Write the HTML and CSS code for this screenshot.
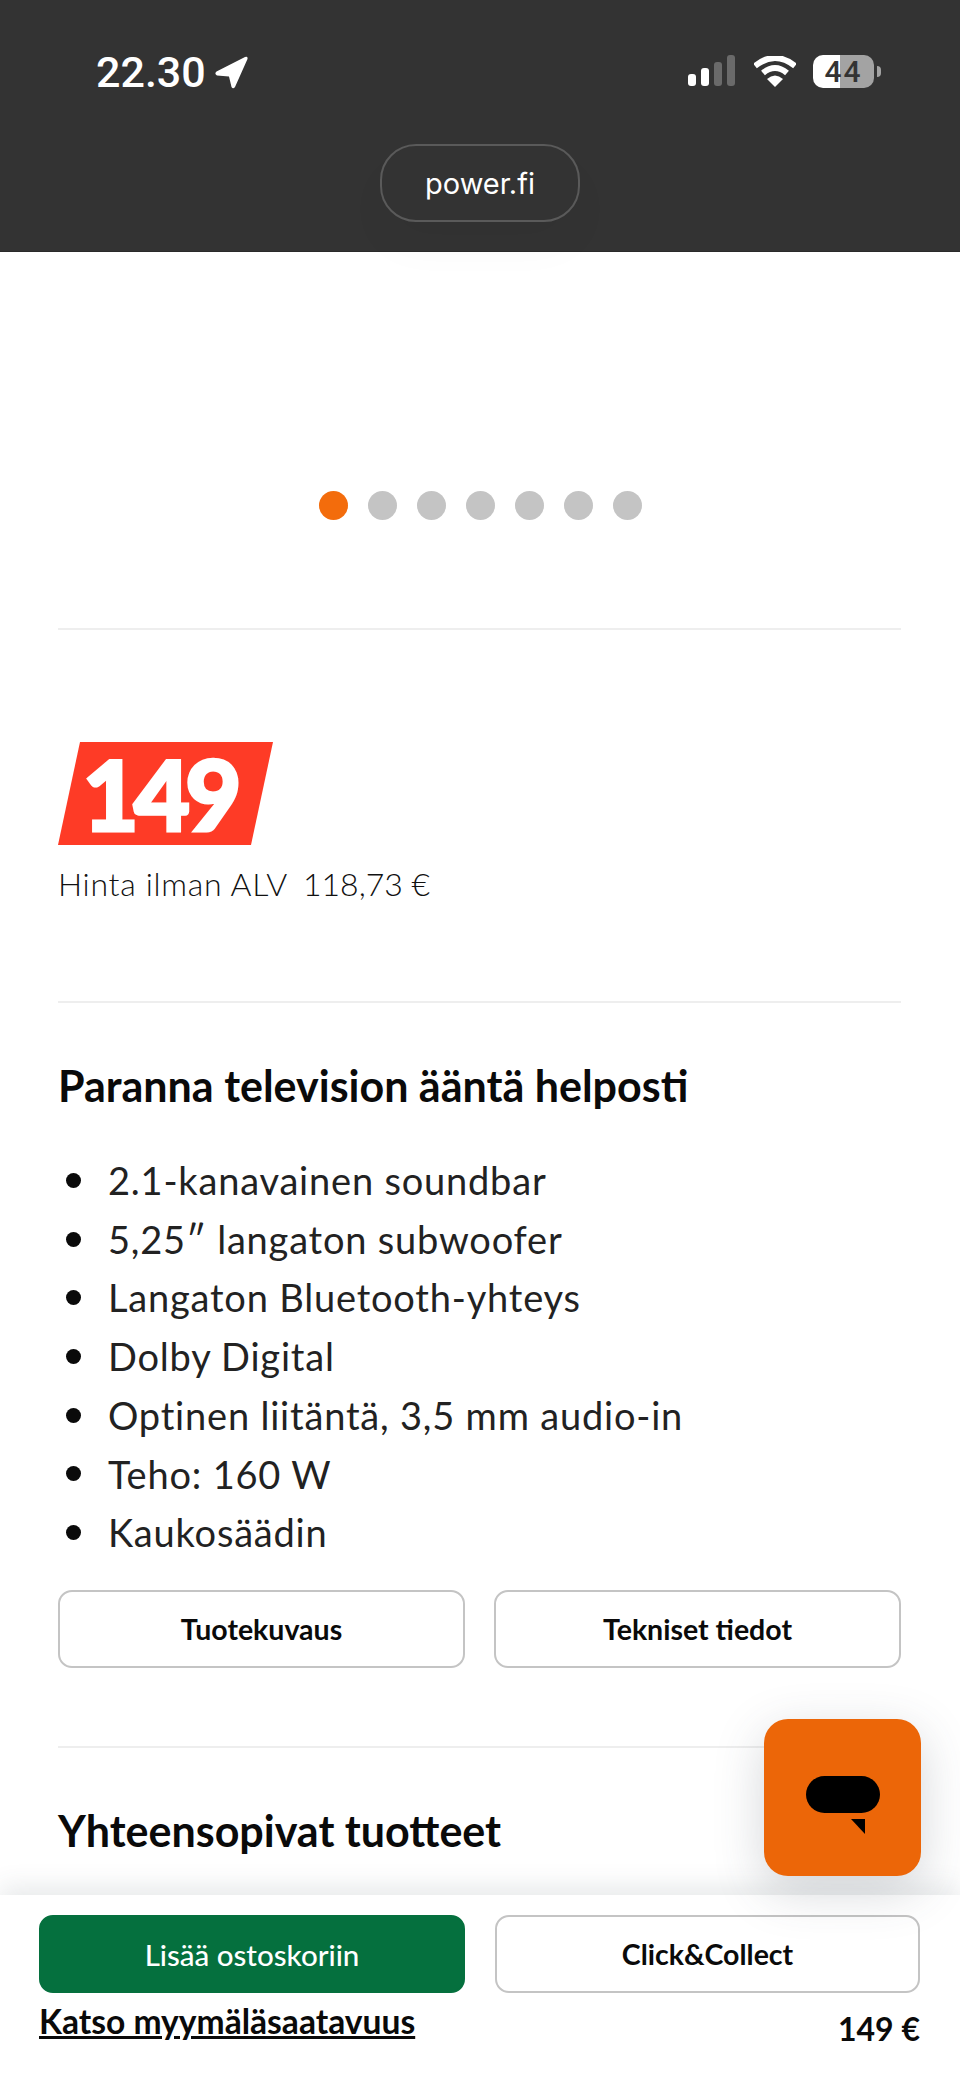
FILE: index.html
```html
<!DOCTYPE html>
<html lang="fi">
<head>
  <meta charset="UTF-8">
  <meta name="viewport" content="width=device-width, initial-scale=1.0">
  <title>Power.fi</title>
  <link rel="stylesheet" href="styles.css">
</head>
<body>
  <header class="status-area">
    <div class="status-bar">
      <div class="status-time">
        <span>22.30</span>
        <svg class="location-icon" width="33" height="33" viewBox="0 0 33 33"><path d="M30 1 Q33 0 32.500 3 L20 31 Q18 33.500 16.500 31 L14 20.500 L2 19.500 Q-1 18 1.500 15.500 Z" fill="#fff"/></svg>
      </div>
      <div class="status-icons">
        <svg class="signal-icon" width="48" height="32" viewBox="0 0 48 32">
          <rect x="0" y="19" width="8" height="12" rx="3" fill="#fff"/>
          <rect x="13" y="13" width="8" height="18" rx="3" fill="#fff"/>
          <rect x="26" y="7" width="8" height="24" rx="3" fill="#6a6a6a"/>
          <rect x="39" y="0" width="8" height="31" rx="3" fill="#6a6a6a"/>
        </svg>
        <svg class="wifi-icon" width="42" height="31" viewBox="0 0 42 31">
          <path d="M1 10 Q21 -6 41 10" fill="none" stroke="#fff" stroke-width="6"/>
          <path d="M9 17 Q21 7 33 17" fill="none" stroke="#fff" stroke-width="6"/>
          <path d="M13 23 Q21 16 29 23 L21 31 Z" fill="#fff"/>
        </svg>
        <div class="battery"><span>44</span></div>
        <div class="battery-tip"></div>
      </div>
    </div>
    <div class="url-pill">power.fi</div>
  </header>

  <section class="gallery">
    <div class="dots">
      <span class="dot active"></span>
      <span class="dot"></span>
      <span class="dot"></span>
      <span class="dot"></span>
      <span class="dot"></span>
      <span class="dot"></span>
      <span class="dot"></span>
    </div>
  </section>

  <section class="price-box">
    <div class="price-tag">149</div>
    <p class="price-vat"><span class="vat-label">Hinta ilman ALV</span><span>118,73 €</span></p>
  </section>

  <section class="description">
    <h2>Paranna television ääntä helposti</h2>
    <ul class="features">
      <li>2.1-kanavainen soundbar</li>
      <li>5,25″ langaton subwoofer</li>
      <li>Langaton Bluetooth-yhteys</li>
      <li>Dolby Digital</li>
      <li>Optinen liitäntä, 3,5 mm audio-in</li>
      <li>Teho: 160 W</li>
      <li>Kaukosäädin</li>
    </ul>
    <div class="tabs">
      <button class="btn">Tuotekuvaus</button>
      <button class="btn">Tekniset tiedot</button>
    </div>
  </section>

  <section class="related">
    <h2>Yhteensopivat tuotteet</h2>
  </section>

  <button class="chat-button" aria-label="Chat">
    <svg width="74" height="60" viewBox="0 0 74 60">
      <rect x="0" y="0" width="74" height="37" rx="18.500" fill="#000"/>
      <path d="M45 43 L59 43 L59 58 Z" fill="#000"/>
    </svg>
  </button>

  <footer class="buy-bar">
    <div class="buy-buttons">
      <button class="btn btn-green">Lisää ostoskoriin</button>
      <button class="btn">Click&amp;Collect</button>
    </div>
    <div class="buy-info">
      <a href="#" class="store-link">Katso myymäläsaatavuus</a>
      <span class="buy-price">149 €</span>
    </div>
  </footer>
</body>
</html>
```

FILE: styles.css
```css
* {
  box-sizing: border-box;
}

html, body {
  margin: 0;
  height: 2081px;
  overflow: hidden;
}

body {
  position: relative;
  background: #fff;
  color: #111;
  font-family: Lato, "Noto Sans", sans-serif;
}

/* Status bar */
.status-area {
  height: 252px;
  background: #333;
  border-bottom: 1px solid #2a2a2a;
  display: flex;
  flex-direction: column;
  align-items: center;
}

.status-bar {
  width: 100%;
  height: 144px;
  padding: 54px 79px 0 96px;
  display: flex;
  justify-content: space-between;
  align-items: flex-start;
  color: #fff;
}

.status-time {
  display: flex;
  align-items: center;
  gap: 9px;
  font-family: Roboto, sans-serif;
  font-size: 43px;
  font-weight: 500;
  line-height: 36px;
}

.status-icons {
  display: flex;
  align-items: center;
  height: 34px;
}

.signal-icon {
  margin-right: 18px;
}

.wifi-icon {
  margin-right: 17px;
}

.battery {
  width: 61px;
  height: 33px;
  border-radius: 10px;
  background: linear-gradient(to right, #fff 45%, #a3a3a3 45%);
  color: #333;
  font-family: Roboto, sans-serif;
  font-size: 30px;
  font-weight: 500;
  letter-spacing: 2px;
  line-height: 33px;
  text-align: center;
}

.battery-tip {
  width: 4px;
  height: 11px;
  margin-left: 3px;
  background: #a3a3a3;
  border-radius: 0 4px 4px 0;
}

.url-pill {
  width: 200px;
  height: 78px;
  border: 2px solid #5a5a5a;
  border-radius: 36px;
  color: #fff;
  font-family: Inter, sans-serif;
  font-size: 29px;
  line-height: 76px;
  text-align: center;
  box-shadow: 0 26px 40px rgba(0, 0, 0, 0.03);
}

/* Gallery dots */
.gallery {
  margin: 0 59px 0 58px;
  padding: 239px 0 108px;
  border-bottom: 2px solid #eee;
}

.dots {
  display: flex;
  justify-content: center;
  gap: 20px;
  padding-left: 1px;
}

.dot {
  width: 29px;
  height: 29px;
  border-radius: 50%;
  background: #c4c4c4;
}

.dot.active {
  background: #f36c0c;
}

/* Price */
.price-box {
  margin: 0 59px 0 58px;
  padding: 112px 0 97px;
  border-bottom: 2px solid #eee;
}

.price-tag {
  width: 215px;
  height: 103px;
  padding-right: 12px;
  background: #fe3b26;
  clip-path: polygon(22px 0, 100% 0, 193px 100%, 0 100%);
  color: #fff;
  font-size: 97px;
  font-weight: 900;
  letter-spacing: -5px;
  line-height: 103px;
  text-align: center;
  -webkit-text-stroke: 3px #fff;
}

.price-vat {
  margin: 19px 0 0;
  display: flex;
  gap: 15px;
  color: #111;
  font-size: 32px;
  font-weight: 300;
  line-height: 40px;
}

.vat-label {
  letter-spacing: 0.700px;
}

/* Description */
.description {
  margin: 0 59px 0 58px;
  padding-top: 58px;
  padding-bottom: 78px;
  border-bottom: 2px solid #eee;
}

h2 {
  margin: 0;
  color: #0a0a0a;
  font-size: 43px;
  font-weight: 700;
  line-height: 50px;
}

.features {
  margin: 40px 0 28px;
  padding: 0 0 0 8px;
  list-style: none;
  color: #222;
  font-size: 38px;
  font-weight: 400;
  letter-spacing: 0.800px;
  line-height: 58.700px;
}

.features li {
  display: flex;
  align-items: center;
  gap: 27px;
}

.features li::before {
  content: "";
  width: 15px;
  height: 15px;
  border-radius: 50%;
  background: #0a0a0a;
}

.tabs {
  display: grid;
  grid-template-columns: 1fr 1fr;
  gap: 29px;
}

.btn {
  height: 78px;
  padding: 0;
  border: 2px solid #c4c4c4;
  border-radius: 14px;
  background: #fff;
  color: #0a0a0a;
  font-family: Lato, sans-serif;
  font-size: 28.500px;
  font-weight: 700;
}

.btn-green {
  background: #05703e;
  border-color: #05703e;
  color: #fff;
  font-size: 29.500px;
  font-weight: 500;
}

/* Related */
.related {
  margin: 0 59px 0 58px;
  padding-top: 58px;
}

/* Overlays */
.chat-button {
  position: absolute;
  left: 764px;
  top: 1719px;
  z-index: 4;
  display: flex;
  align-items: flex-start;
  width: 157px;
  height: 157px;
  padding: 57px 0 0 42px;
  border: 0;
  border-radius: 24px;
  background: #ec6608;
  box-shadow: 0 14px 50px rgba(60, 70, 80, 0.22);
}

.buy-bar {
  position: absolute;
  left: 0;
  right: 0;
  top: 1895px;
  z-index: 3;
  height: 186px;
  padding: 20px 40px 0 39px;
  background: #fff;
  box-shadow: 0 -8px 24px rgba(60, 70, 80, 0.12);
}

.buy-buttons {
  display: grid;
  grid-template-columns: 426px 425px;
  justify-content: space-between;
}

.buy-info {
  display: flex;
  justify-content: space-between;
  align-items: flex-start;
  margin-top: 6px;
}

.store-link {
  color: #0a0a0a;
  font-size: 33.600px;
  font-weight: 700;
  line-height: 44px;
}

.buy-price {
  margin-top: 8px;
  color: #0a0a0a;
  font-size: 32px;
  font-weight: 700;
  line-height: 44px;
}
```
